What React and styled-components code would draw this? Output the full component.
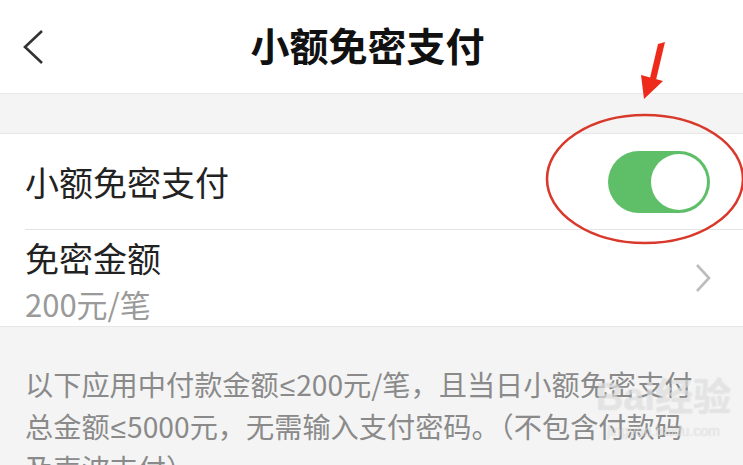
import React from 'react';
import styled, { createGlobalStyle } from 'styled-components';

const GlobalStyle = createGlobalStyle`
  html, body {
    margin: 0;
    padding: 0;
    background: #f4f4f4;
    overflow: hidden;
  }
  body {
    font-family: 'Noto Sans CJK SC', 'Noto Sans', sans-serif;
  }
`;

const Page = styled.div`
  position: relative;
  width: 743px;
  height: 465px;
  overflow: hidden;
  background: #f4f4f4;
`;

const Header = styled.header`
  height: 93px;
  background: #fff;
  border-bottom: 1px solid #e8e8e8;
  display: grid;
  grid-template-columns: 80px 1fr 80px;
  align-items: center;
`;

const BackButton = styled.div`
  display: flex;
  align-items: center;
  padding-left: 20px;
  height: 100%;
`;

const Title = styled.h1`
  margin: 0;
  text-align: center;
  font-size: 39px;
  font-weight: 700;
  color: #111;
  line-height: 1;
  padding: 0 8px 4px 0;
`;

const Gap = styled.div`
  height: 39px;
`;

const Group = styled.section`
  background: #fff;
  border-top: 1px solid #e6e6e6;
  border-bottom: 1px solid #e6e6e6;
`;

const Row = styled.div`
  height: ${(p) => p.$height}px;
  display: flex;
  align-items: center;
  justify-content: space-between;
  padding: 0 ${(p) => p.$right}px 0 25px;

  & + & {
    border-top: 1px solid #e4e4e4;
    margin-left: 25px;
    padding-left: 0;
  }
`;

const Label = styled.div`
  font-size: 34px;
  color: #222;
  line-height: 1;
`;

const Stack = styled.div`
  display: flex;
  flex-direction: column;
  gap: 13px;
  padding-top: 4px;
`;

const SubLabel = styled.div`
  font-size: 31px;
  color: #9a9a9a;
  line-height: 1;
`;

const Toggle = styled.div`
  width: 102px;
  height: 62px;
  border-radius: 31px;
  background: #5fbf68;
  display: flex;
  align-items: center;
  justify-content: flex-end;
  padding: 0 3px;
  box-sizing: border-box;
`;

const Knob = styled.div`
  width: 56px;
  height: 56px;
  border-radius: 50%;
  background: #fff;
`;

const Note = styled.div`
  padding: 37px 0 0 25px;
  font-size: 28.2px;
  line-height: 40px;
  color: #8a8a8a;
`;

const NoteLine = styled.div`
  white-space: nowrap;
`;

const Sym = styled.span`
  font-family: 'Liberation Sans', sans-serif;
  padding: 0 1px;
`;

const Overlay = styled.svg`
  position: absolute;
  left: 0;
  top: 0;
  pointer-events: none;
`;

const Watermark = styled.div`
  position: absolute;
  left: 596px;
  top: 378px;
  display: flex;
  flex-direction: column;
  align-items: center;
  white-space: nowrap;
  color: rgba(255, 255, 255, 0.45);
  text-shadow: 0 0 1px rgba(160, 160, 160, 0.45);
  font-family: 'Liberation Sans', 'Noto Sans CJK SC', sans-serif;
  pointer-events: none;
`;

const MarkTop = styled.div`
  font-size: 38px;
  font-weight: 700;
  line-height: 1;
`;

const MarkBottom = styled.div`
  font-size: 14px;
  line-height: 1;
  margin-top: 8px;
`;

export default function App() {
  return (
    <Page>
      <GlobalStyle />
      <Header>
        <BackButton>
          <svg width="26" height="36" viewBox="0 0 26 36">
            <path d="M22 2 L5 18 L22 34" fill="none" stroke="#333" strokeWidth="2.6" />
          </svg>
        </BackButton>
        <Title>小额免密支付</Title>
        <div />
      </Header>
      <Gap />
      <Group>
        <Row $height={95} $right={33}>
          <Label>小额免密支付</Label>
          <Toggle>
            <Knob />
          </Toggle>
        </Row>
        <Row $height={96} $right={31}>
          <Stack>
            <Label>免密金额</Label>
            <SubLabel>200元/笔</SubLabel>
          </Stack>
          <svg width="18" height="30" viewBox="0 0 18 30">
            <path d="M3 2 L15 15 L3 28" fill="none" stroke="#bdbdbd" strokeWidth="2.6" />
          </svg>
        </Row>
      </Group>
      <Note>
        <NoteLine>以下应用中付款金额<Sym>≤</Sym>200元/笔，且当日小额免密支付</NoteLine>
        <NoteLine>总金额<Sym>≤</Sym>5000元，无需输入支付密码。（不包含付款码</NoteLine>
        <NoteLine>及声波支付）</NoteLine>
      </Note>
      <Watermark>
        <MarkTop>Bai经验</MarkTop>
        <MarkBottom>jingyan.baidu.com</MarkBottom>
      </Watermark>
      <Overlay width="743" height="465" viewBox="0 0 743 465">
        <ellipse cx="645" cy="179" rx="98" ry="64" fill="none" stroke="#d9392b" strokeWidth="2.6" />
        <path d="M665 42 L658 44 L650 78 L656 80 Z" fill="#ee2b1b" />
        <path d="M641 75 L663 81 L644 99 Z" fill="#ee2b1b" />
      </Overlay>
    </Page>
  );
}
